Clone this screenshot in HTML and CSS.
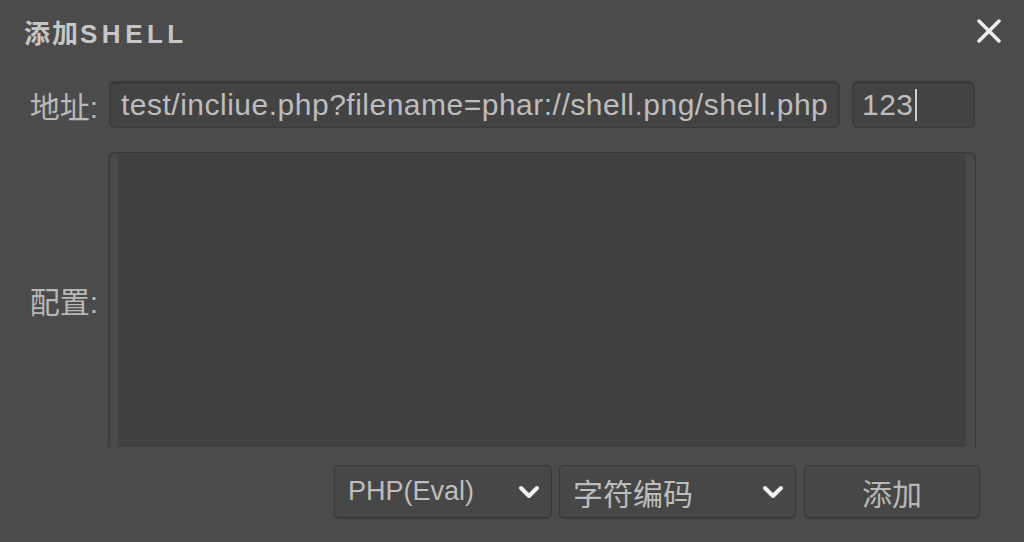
FILE: index.html
```html
<!DOCTYPE html>
<html lang="zh">
<head>
  <meta charset="UTF-8">
  <title>添加SHELL</title>
  <link rel="stylesheet" href="styles.css">
</head>
<body>

  <!-- KOPF -->
  <div class="dialog-head">
    <div class="dialog-title">添加<span class="latin">SHELL</span></div>
    <svg class="close-icon" width="26" height="24" viewBox="0 0 26 24">
      <line x1="3" y1="2" x2="23" y2="22" />
      <line x1="23" y1="2" x2="3" y2="22" />
    </svg>
  </div>

  <!-- ADRESSE -->
  <div class="form-row">
    <div class="form-label">地址:</div>
    <div class="field url-field">test/incliue.php?filename=phar://shell.png/shell.php</div>
    <div class="field pass-field">123<span class="caret"></span></div>
  </div>

  <!-- KONFIGURATION -->
  <div class="form-row config-row">
    <div class="form-label">配置:</div>
    <div class="config-box">
      <div class="config-area"></div>
    </div>
  </div>

  <!-- AKTIONEN -->
  <div class="action-row">
    <div class="select-box type-select">
      <span>PHP(Eval)</span>
      <svg class="chevron" width="22" height="14" viewBox="0 0 22 14"><polyline points="3,3 11,11 19,3" /></svg>
    </div>
    <div class="select-box charset-select">
      <span>字符编码</span>
      <svg class="chevron" width="22" height="14" viewBox="0 0 22 14"><polyline points="3,3 11,11 19,3" /></svg>
    </div>
    <div class="add-button">添加</div>
  </div>

</body>
</html>
```

FILE: styles.css
```css
/* RESET */
* {
  margin: 0;
  padding: 0;
  box-sizing: border-box;
}

body, html {
  width: 1024px;
  height: 542px;
  overflow: hidden;
  background-color: #4b4b4b;
  color: #bdbdbd;
  font-family: "Liberation Sans", "Noto Sans CJK SC", sans-serif;
}

/* KOPF */
.dialog-head {
  height: 62px;
  display: flex;
  justify-content: space-between;
  align-items: center;
  padding: 0 22px 0 24px;
}

.dialog-title {
  font-size: 26px;
  font-weight: bold;
  color: #c6c6c6;
  letter-spacing: 2px;
}

.dialog-title .latin {
  letter-spacing: 4.5px;
}

.close-icon {
  stroke: #ececec;
  stroke-width: 3.5;
  stroke-linecap: round;
}

/* FORMULAR */
.form-row {
  display: flex;
  align-items: center;
  margin-top: 19px;
}

.form-label {
  width: 98px;
  text-align: right;
  font-size: 30px;
  color: #b8b8b8;
  margin-right: 11px;
}

.field {
  height: 47px;
  display: flex;
  align-items: center;
  padding-left: 11px;
  background-color: #434343;
  border: 1px solid #3a3a3a;
  border-radius: 6px;
  box-shadow: inset 0 1px 2px rgba(0, 0, 0, 0.25);
  font-size: 30px;
  letter-spacing: 0.5px;
  white-space: nowrap;
  overflow: hidden;
}

.url-field {
  width: 731px;
}

.pass-field {
  width: 123px;
  margin-left: 12px;
  padding-left: 9px;
}

.caret {
  display: inline-block;
  width: 2px;
  height: 32px;
  margin-left: 1px;
  background-color: #d0d0d0;
}

/* KONFIGURATION */
.config-row {
  margin-top: 24px;
}

.config-row .form-label {
  margin-right: 10px;
}

.config-box {
  width: 868px;
  height: 295px;
  padding: 2px 9px 0 9px;
  border: 1px solid #3a3a3a;
  border-bottom: none;
  border-radius: 6px 6px 0 0;
  background-color: #4a4a4a;
  box-shadow: inset 1px 1px 2px rgba(0, 0, 0, 0.2);
}

.config-area {
  height: 100%;
  background-color: #414141;
  border-radius: 4px 4px 0 0;
}

/* AKTIONEN */
.action-row {
  display: flex;
  justify-content: flex-end;
  gap: 7px;
  margin-top: 18px;
  padding-right: 44px;
}

.select-box, .add-button {
  height: 53px;
  display: flex;
  align-items: center;
  background-color: #474747;
  border: 1px solid #393939;
  border-radius: 5px;
  box-shadow: 0 1px 1px rgba(0, 0, 0, 0.2);
  font-size: 30px;
}

.select-box {
  justify-content: space-between;
  padding: 0 11px 0 13px;
}

.type-select {
  width: 218px;
  font-size: 27px;
}

.charset-select {
  width: 237px;
}

.add-button {
  width: 176px;
  margin-left: 1px;
  justify-content: center;
  color: #b8b8b8;
}

.chevron {
  fill: none;
  stroke: #f0f0f0;
  stroke-width: 4;
  stroke-linecap: round;
  stroke-linejoin: round;
}
```
